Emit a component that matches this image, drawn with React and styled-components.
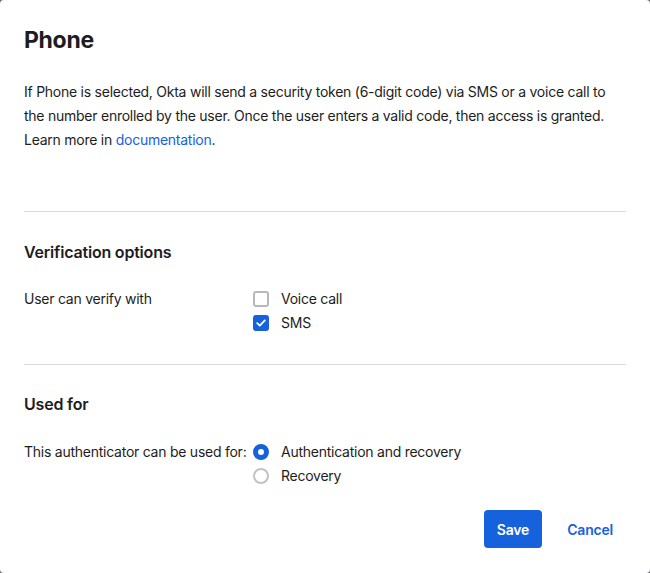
import React from 'react';
import styled, { createGlobalStyle } from 'styled-components';

const GlobalStyle = createGlobalStyle`
  html, body {
    margin: 0;
    padding: 0;
    background: #6e6e78;
  }
  body {
    font-family: Inter, "Noto Sans", sans-serif;
    color: #1d1d21;
    letter-spacing: -0.25px;
    -webkit-font-smoothing: antialiased;
  }
`;

const Dialog = styled.div`
  width: 650px;
  height: 573px;
  box-sizing: border-box;
  background: #ffffff;
  border-radius: 4px;
  padding: 24px 24px 0 24px;
  display: flex;
  flex-direction: column;
`;

const Title = styled.h1`
  margin: 2px 0 0 0;
  font-size: 23px;
  line-height: 28px;
  font-weight: 700;
  letter-spacing: -0.3px;
`;

const Intro = styled.p`
  margin: 26px 0 0 0;
  font-size: 14px;
  line-height: 24px;
  font-weight: 400;
  white-space: nowrap;
`;

const Link = styled.a`
  color: #1662dd;
  text-decoration: none;
`;

const Divider = styled.hr`
  border: none;
  border-top: 1px solid #d7d7dc;
  margin: ${(p) => p.$top}px 0 0 0;
  width: 602px;
`;

const SectionTitle = styled.h2`
  margin: ${(p) => p.$top ?? 28}px 0 0 0;
  font-size: 16px;
  line-height: 24px;
  font-weight: 600;
  letter-spacing: -0.2px;
`;

const FieldRow = styled.div`
  display: grid;
  grid-template-columns: 229px 1fr;
  margin-top: ${(p) => p.$top ?? 23}px;
  font-size: 14px;
  line-height: 24px;
`;

const FieldLabel = styled.div`
  white-space: nowrap;
`;

const Options = styled.div`
  display: flex;
  flex-direction: column;
`;

const Option = styled.label`
  display: flex;
  align-items: center;
  gap: 12px;
  height: 24px;
`;

const Box = styled.span`
  width: 16px;
  height: 16px;
  box-sizing: border-box;
  border-radius: 3px;
  border: ${(p) => (p.$checked ? 'none' : '2px solid #b8b8c0')};
  background: ${(p) => (p.$checked ? '#1662dd' : '#fff')};
  display: flex;
  align-items: center;
  justify-content: center;
  flex-shrink: 0;
`;

const Radio = styled.span`
  width: 16px;
  height: 16px;
  box-sizing: border-box;
  border-radius: 50%;
  border: ${(p) => (p.$checked ? '5px solid #1662dd' : '2px solid #c2c2c8')};
  background: #fff;
  flex-shrink: 0;
`;

const Footer = styled.div`
  display: flex;
  justify-content: flex-end;
  align-items: center;
  gap: 12px;
  margin-top: 22px;
`;

const PrimaryButton = styled.button`
  height: 38px;
  padding: 0 13px;
  border: none;
  border-radius: 4px;
  background: #1662dd;
  color: #fff;
  font-family: inherit;
  font-size: 14px;
  font-weight: 600;
  letter-spacing: -0.2px;
`;

const LinkButton = styled.button`
  height: 38px;
  padding: 0 13px;
  border: none;
  background: transparent;
  color: #1662dd;
  font-family: inherit;
  font-size: 14px;
  font-weight: 600;
  letter-spacing: -0.2px;
`;

const Check = () => (
  <svg width="10" height="8" viewBox="0 0 10 8" fill="none">
    <path d="M1.2 4.2 L3.8 6.6 L8.8 1.4" stroke="#fff" strokeWidth="1.8" strokeLinecap="round" strokeLinejoin="round" />
  </svg>
);

export default function App() {
  return (
    <>
      <GlobalStyle />
      <Dialog>
        <Title>Phone</Title>
        <Intro>
          If Phone is selected, Okta will send a security token (6-digit code) via SMS or a voice call to
          <br />
          the number enrolled by the user. Once the user enters a valid code, then access is granted.
          <br />
          Learn more in <Link href="#">documentation</Link>.
        </Intro>
        <Divider $top={59} />
        <SectionTitle>Verification options</SectionTitle>
        <FieldRow>
          <FieldLabel>User can verify with</FieldLabel>
          <Options>
            <Option>
              <Box />
              Voice call
            </Option>
            <Option>
              <Box $checked>
                <Check />
              </Box>
              SMS
            </Option>
          </Options>
        </FieldRow>
        <Divider $top={29} />
        <SectionTitle $top={27}>Used for</SectionTitle>
        <FieldRow $top={24}>
          <FieldLabel>This authenticator can be used for:</FieldLabel>
          <Options>
            <Option>
              <Radio $checked />
              Authentication and recovery
            </Option>
            <Option>
              <Radio />
              Recovery
            </Option>
          </Options>
        </FieldRow>
        <Footer>
          <PrimaryButton>Save</PrimaryButton>
          <LinkButton>Cancel</LinkButton>
        </Footer>
      </Dialog>
    </>
  );
}
